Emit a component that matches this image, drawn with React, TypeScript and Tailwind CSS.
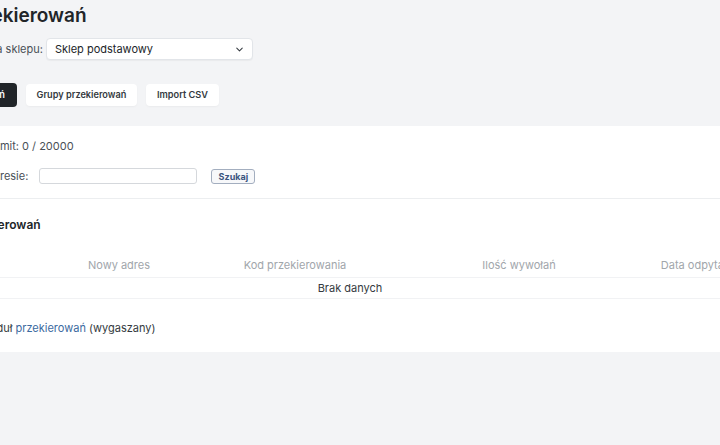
import { ChevronDown } from "lucide-react";

const headers = ["Stary adres", "Nowy adres", "Kod przekierowania", "Ilość wywołań", "Data odpytania", "Akcje"];

export default function App() {
  return (
    <div
      className="w-[720px] h-[445px] overflow-hidden bg-[#f3f4f6] text-[#343a40]"
      style={{ fontFamily: "Inter, 'Noto Sans', sans-serif" }}
    >
      {/* header */}
      <div className="pt-[4px]">
        <h1 className="-ml-[87px] h-[24px] text-[19px] leading-[24px] font-semibold text-[#212529] whitespace-nowrap">
          Lista przekierowań
        </h1>

        <div className="mt-[10px] flex items-center -ml-[33px]">
          <label className="text-[11px] text-[#495057] whitespace-nowrap">Wersja sklepu:</label>
          <div className="ml-[3px] flex h-[22px] w-[207px] items-center justify-between rounded-[4px] border border-[#e2e5e9] bg-white pl-[8px] pr-[7px] text-[11px] text-[#212529] shadow-[0_1px_1px_rgba(0,0,0,0.04)]">
            <span>Sklep podstawowy</span>
            <ChevronDown size={11} strokeWidth={2.2} className="text-[#343a40]" />
          </div>
        </div>

        <div className="mt-[23px] flex items-center gap-[9px] -ml-[97px]">
          <button className="h-[24px] w-[114px] rounded-[4px] bg-[#212529] pr-[12px] text-right text-[9.2px] font-semibold text-white whitespace-nowrap">
            Lista przekierowań
          </button>
          <button className="h-[22px] w-[111px] rounded-[4px] bg-white text-[9.2px] font-semibold text-[#343a40] shadow-[0_1px_2px_rgba(0,0,0,0.04)] whitespace-nowrap">
            Grupy przekierowań
          </button>
          <button className="h-[22px] w-[73px] rounded-[4px] bg-white text-[9.2px] font-semibold text-[#343a40] shadow-[0_1px_2px_rgba(0,0,0,0.04)] whitespace-nowrap">
            Import CSV
          </button>
        </div>
      </div>

      {/* panel */}
      <div className="mt-[19px] h-[226px] w-[1100px] -ml-[200px] bg-white">
        <div className="pl-[191px] pt-[13px] text-[11px] text-[#495057]">
          <div className="h-[14px] leading-[14px] whitespace-nowrap">Limit: 0 / 20000</div>
          <div className="mt-[14px] flex h-[18px] items-center -ml-[58px]">
            <label className="whitespace-nowrap">Szukaj po adresie:</label>
            <input className="ml-[11px] h-[16px] w-[158px] rounded-[3px] border border-[#d5d8dc] bg-white outline-none" />
            <button className="ml-[14px] h-[15px] w-[44px] rounded-[3px] border border-[#a3aebf] bg-[#f7f8fa] text-[9px] font-bold leading-none text-[#3b5580]">
              Szukaj
            </button>
          </div>
        </div>

        <div className="mt-[13px] border-t border-[#eceef0]" />

        <div className="mt-[19px] pl-[131px] h-[14px] text-[12px] leading-[14px] font-semibold text-[#212529] whitespace-nowrap">
          Lista przekierowań
        </div>

        <div className="mt-[21px]">
          <div className="grid h-[25px] grid-cols-[238px_162px_190px_258px_104px_148px] items-center border-b border-[#f1f2f4] text-[11px] text-[#a1a6ab]">
            {headers.map((h) => (
              <div key={h} className="text-center whitespace-nowrap">
                {h}
              </div>
            ))}
          </div>
          <div className="flex h-[21px] items-center justify-center border-b border-[#f1f2f4] text-[11px] text-[#343a40]">
            Brak danych
          </div>
        </div>

        <div className="mt-[21px] pl-[180px] text-[11px] text-[#343a40] whitespace-nowrap">
          Moduł <span className="text-[#3b6aa0]">przekierowań</span> (wygaszany)
        </div>
      </div>
    </div>
  );
}
